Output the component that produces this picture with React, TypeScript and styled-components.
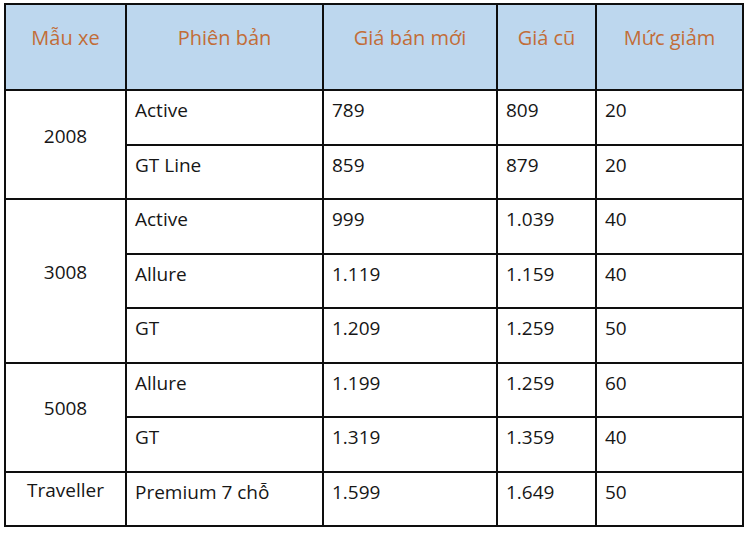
import React from "react";
import styled, { createGlobalStyle } from "styled-components";

const GlobalStyle = createGlobalStyle`
  html, body {
    margin: 0;
    padding: 0;
    background: #ffffff;
  }
  body {
    font-family: "Open Sans", "Liberation Sans", sans-serif;
  }
`;

const Page = styled.div`
  width: 750px;
  height: 534px;
  padding: 3px 0 0 4px;
  box-sizing: border-box;
  background: #ffffff;
`;

const Table = styled.table`
  border-collapse: collapse;
  table-layout: fixed;
  width: 738px;
  font-size: 19px;
  line-height: 24px;
  color: #161616;
`;

const HeadRow = styled.tr`
  height: 86px;
`;

const BodyRow = styled.tr`
  height: 54.5px;
`;

const HeadCell = styled.th`
  border: 2px solid #0e0e0e;
  background: #bdd7ee;
  color: #c26d38;
  font-size: 20px;
  font-weight: 400;
  text-align: center;
  vertical-align: middle;
  padding: 0 4px 19px;
  white-space: nowrap;
`;

const Cell = styled.td<{ $model?: boolean }>`
  border: 2px solid #0e0e0e;
  text-align: ${(p) => (p.$model ? "center" : "left")};
  vertical-align: middle;
  padding: ${(p) => (p.$model ? "0 4px 18px" : "0 6px 14px 8px")};
  white-space: nowrap;
`;

const widths = [121, 197, 174, 99, 147];
const headers = ["Mẫu xe", "Phiên bản", "Giá bán mới", "Giá cũ", "Mức giảm"];

type Group = {
  model: string;
  rows: [string, string, string, string][];
};

const data: Group[] = [
  {
    model: "2008",
    rows: [
      ["Active", "789", "809", "20"],
      ["GT Line", "859", "879", "20"],
    ],
  },
  {
    model: "3008",
    rows: [
      ["Active", "999", "1.039", "40"],
      ["Allure", "1.119", "1.159", "40"],
      ["GT", "1.209", "1.259", "50"],
    ],
  },
  {
    model: "5008",
    rows: [
      ["Allure", "1.199", "1.259", "60"],
      ["GT", "1.319", "1.359", "40"],
    ],
  },
  {
    model: "Traveller",
    rows: [["Premium 7 chỗ", "1.599", "1.649", "50"]],
  },
];

export default function App() {
  return (
    <Page>
      <GlobalStyle />
      <Table>
        <colgroup>
          {widths.map((w, i) => (
            <col key={i} style={{ width: w }} />
          ))}
        </colgroup>
        <thead>
          <HeadRow>
            {headers.map((h) => (
              <HeadCell key={h}>{h}</HeadCell>
            ))}
          </HeadRow>
        </thead>
        <tbody>
          {data.map((g) =>
            g.rows.map((r, i) => (
              <BodyRow key={g.model + i}>
                {i === 0 && (
                  <Cell $model rowSpan={g.rows.length}>
                    {g.model}
                  </Cell>
                )}
                {r.map((v, j) => (
                  <Cell key={j}>{v}</Cell>
                ))}
              </BodyRow>
            ))
          )}
        </tbody>
      </Table>
    </Page>
  );
}
